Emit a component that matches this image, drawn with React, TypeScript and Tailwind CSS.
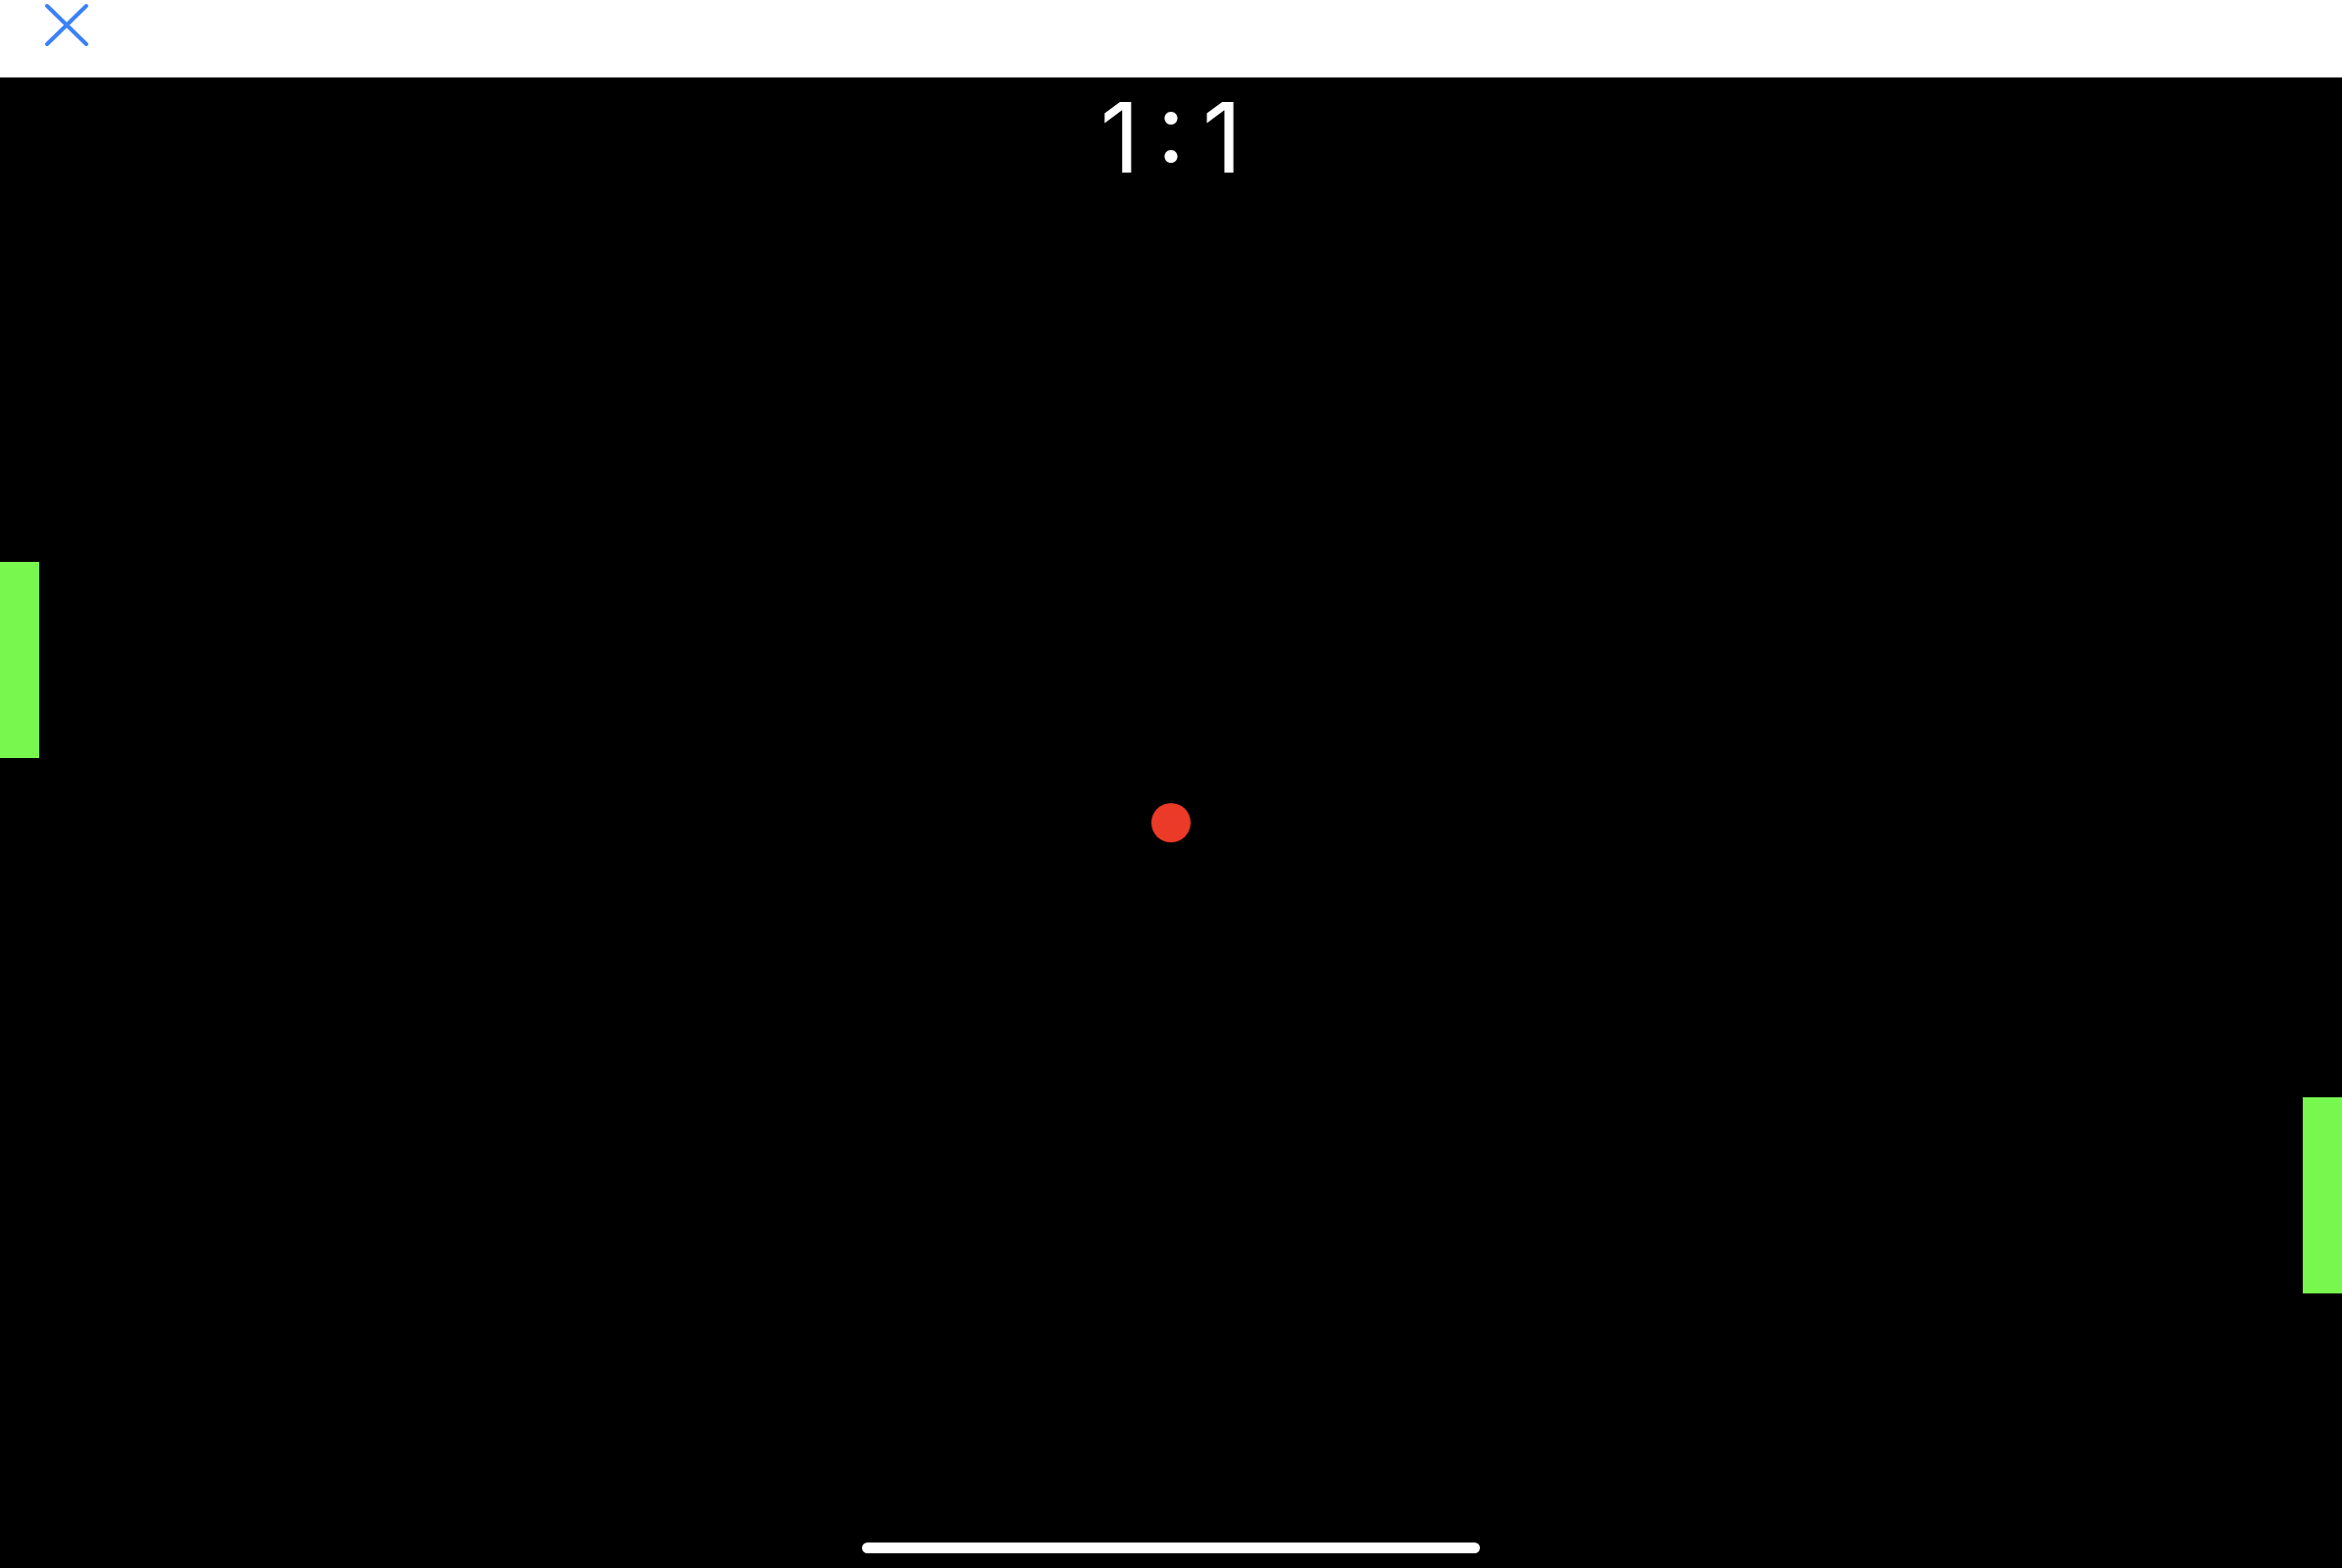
import React from "react";

// Pong board: paddles and ball sit on a free canvas, so they are placed absolutely.
const paddle = "absolute w-[40px] h-[200px] bg-[#78f84e]";

export default function App() {
  return (
    <div className="w-[2388px] h-[1599px] flex flex-col bg-black overflow-hidden" style={{ fontFamily: "Inter, 'Noto Sans', sans-serif" }}>
      <div className="h-[79px] shrink-0 bg-white flex items-start pl-[45px] pt-[3px]">
        <button aria-label="Close" className="w-[46px] h-[46px]">
          <svg width="46" height="46" viewBox="0 0 46 46" fill="none">
            <path d="M3 3 L43 42 M43 3 L3 42" stroke="#3a82f7" strokeWidth="4" strokeLinecap="round" />
          </svg>
        </button>
      </div>

      <div className="relative flex-1 flex flex-col items-center">
        <div className="pt-[12px] text-white text-[99px] leading-none font-normal [word-spacing:-10px]">1 : 1</div>

        <div className="flex-1" />
        <div className="mb-[15px] w-[630px] h-[11px] rounded-full bg-white" />

        <div className={`${paddle} left-0 top-[494px]`} />
        <div className={`${paddle} right-0 top-[1040px]`} />
        <div className="absolute left-[1174px] top-[740px] w-[40px] h-[40px] rounded-full bg-[#eb3a27]" />
      </div>
    </div>
  );
}
